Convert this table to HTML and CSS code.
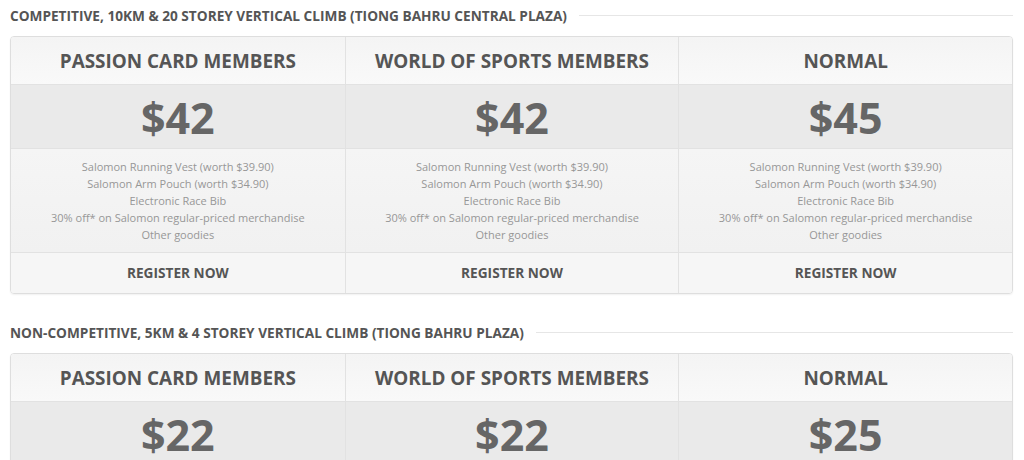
FILE: index.html
```html
<!DOCTYPE html>
<html lang="en">
<head>
<meta charset="utf-8">
<title>Pricing</title>
<link rel="stylesheet" href="styles.css">
</head>
<body>
<div class="page">
  <section class="section">
    <h2 class="section-title"><span>Competitive, 10KM &amp; 20 Storey Vertical Climb (Tiong Bahru Central Plaza)</span><i class="rule"></i></h2>
    <div class="table">
      <div class="col">
        <div class="head">Passion Card Members</div>
        <div class="price">$42</div>
        <ul class="feats">
          <li>Salomon Running Vest (worth $39.90)</li>
          <li>Salomon Arm Pouch (worth $34.90)</li>
          <li>Electronic Race Bib</li>
          <li>30% off* on Salomon regular-priced merchandise</li>
          <li>Other goodies</li>
        </ul>
        <a class="reg" href="#">Register Now</a>
      </div>
      <div class="col">
        <div class="head">World of Sports Members</div>
        <div class="price">$42</div>
        <ul class="feats">
          <li>Salomon Running Vest (worth $39.90)</li>
          <li>Salomon Arm Pouch (worth $34.90)</li>
          <li>Electronic Race Bib</li>
          <li>30% off* on Salomon regular-priced merchandise</li>
          <li>Other goodies</li>
        </ul>
        <a class="reg" href="#">Register Now</a>
      </div>
      <div class="col">
        <div class="head">Normal</div>
        <div class="price">$45</div>
        <ul class="feats">
          <li>Salomon Running Vest (worth $39.90)</li>
          <li>Salomon Arm Pouch (worth $34.90)</li>
          <li>Electronic Race Bib</li>
          <li>30% off* on Salomon regular-priced merchandise</li>
          <li>Other goodies</li>
        </ul>
        <a class="reg" href="#">Register Now</a>
      </div>
    </div>
  </section>
  <section class="section">
    <h2 class="section-title"><span>Non-Competitive, 5KM &amp; 4 Storey Vertical Climb (Tiong Bahru Plaza)</span><i class="rule"></i></h2>
    <div class="table">
      <div class="col">
        <div class="head">Passion Card Members</div>
        <div class="price">$22</div>
        <ul class="feats">
          <li>Salomon Running Vest (worth $39.90)</li>
          <li>Salomon Arm Pouch (worth $34.90)</li>
          <li>Electronic Race Bib</li>
          <li>30% off* on Salomon regular-priced merchandise</li>
          <li>Other goodies</li>
        </ul>
        <a class="reg" href="#">Register Now</a>
      </div>
      <div class="col">
        <div class="head">World of Sports Members</div>
        <div class="price">$22</div>
        <ul class="feats">
          <li>Salomon Running Vest (worth $39.90)</li>
          <li>Salomon Arm Pouch (worth $34.90)</li>
          <li>Electronic Race Bib</li>
          <li>30% off* on Salomon regular-priced merchandise</li>
          <li>Other goodies</li>
        </ul>
        <a class="reg" href="#">Register Now</a>
      </div>
      <div class="col">
        <div class="head">Normal</div>
        <div class="price">$25</div>
        <ul class="feats">
          <li>Salomon Running Vest (worth $39.90)</li>
          <li>Salomon Arm Pouch (worth $34.90)</li>
          <li>Electronic Race Bib</li>
          <li>30% off* on Salomon regular-priced merchandise</li>
          <li>Other goodies</li>
        </ul>
        <a class="reg" href="#">Register Now</a>
      </div>
    </div>
  </section>
</div>
</body>
</html>
```
FILE: styles.css
```css
html, body {
  margin: 0;
  padding: 0;
  background: #fff;
}
body {
  font-family: "Open Sans", "Liberation Sans", sans-serif;
  color: #555;
  overflow: hidden;
}
.page {
  padding: 0 11px 0 10px;
}
.section {
  margin-bottom: 23px;
}
.section-title {
  display: flex;
  align-items: center;
  gap: 12px;
  height: 30px;
  margin: 0 0 6px;
  font-size: 13.65px;
  font-weight: 700;
  text-transform: uppercase;
  color: #555;
  white-space: nowrap;
}
.section-title .rule {
  flex: 1;
  height: 1px;
  background: #e6e6e6;
}
.table {
  display: grid;
  grid-template-columns: 1fr 1fr 1fr;
  border: 1px solid #dedede;
  border-radius: 4px;
  overflow: hidden;
  box-shadow: 0 1px 2px rgba(0,0,0,0.06);
}
.col {
  display: flex;
  flex-direction: column;
  text-align: center;
}
.col + .col {
  border-left: 1px solid #e2e2e2;
}
.head {
  height: 45px;
  padding-top: 2px;
  line-height: 45px;
  font-size: 18.9px;
  font-weight: 700;
  text-transform: uppercase;
  color: #555;
  background: linear-gradient(#f4f4f4, #f9f9f9);
  border-bottom: 1px solid #e2e2e2;
}
.price {
  height: 61px;
  padding-top: 2px;
  line-height: 61px;
  font-size: 43px;
  font-weight: 700;
  color: #666;
  background: #eaeaea;
  border-bottom: 1px solid #e2e2e2;
}
.feats {
  list-style: none;
  margin: 0;
  padding: 9px 0;
  height: 85px;
  font-size: 11px;
  line-height: 17px;
  color: #979797;
  background: linear-gradient(#f5f5f5, #f1f1f1);
  border-bottom: 1px solid #e2e2e2;
}
.reg {
  display: block;
  height: 40px;
  line-height: 40px;
  font-size: 13.65px;
  font-weight: 700;
  text-transform: uppercase;
  color: #555;
  text-decoration: none;
  background: #f6f6f6;
}
```
